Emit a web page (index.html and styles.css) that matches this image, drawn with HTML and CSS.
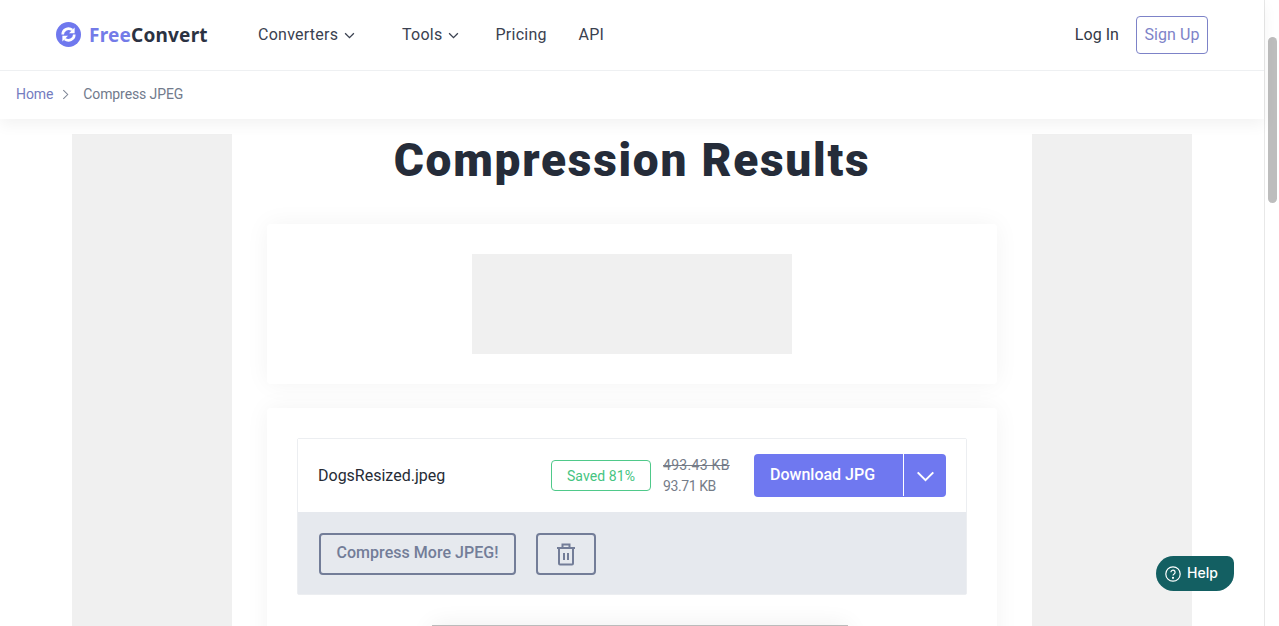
FILE: index.html
```html
<!DOCTYPE html>
<html lang="en">
<head>
<meta charset="utf-8">
<title>Compress JPEG</title>
<link rel="stylesheet" href="styles.css">
</head>
<body>
<div class="app">
  <div class="page">
    <header class="top">
      <nav class="nav">
        <a class="logo">
          <svg class="logo-icon" viewBox="0 0 25 25" width="25" height="25"><circle cx="12.500" cy="12.500" r="12.500" fill="#6f78ee"/><path d="M6.700 12.500a5.800 5.800 0 0 1 9.600-4.400" fill="none" stroke="#fff" stroke-width="2.600"/><path d="M18.300 12.500a5.800 5.800 0 0 1-9.600 4.400" fill="none" stroke="#fff" stroke-width="2.600"/><path d="M18.600 5.600v5.600h-5.600z" fill="#fff"/><path d="M6.400 19.400v-5.600h5.600z" fill="#fff"/></svg>
          <span class="logo-text"><span class="logo-free">Free</span>Convert</span>
        </a>
        <ul class="menu">
          <li class="menu-item m-conv">Converters <svg class="chev" viewBox="0 0 12 8" width="11" height="7"><path d="M1 1.500l5 5 5-5" fill="none" stroke="#3a4150" stroke-width="1.500"/></svg></li>
          <li class="menu-item m-tools">Tools <svg class="chev" viewBox="0 0 12 8" width="11" height="7"><path d="M1 1.500l5 5 5-5" fill="none" stroke="#3a4150" stroke-width="1.500"/></svg></li>
          <li class="menu-item m-pricing">Pricing</li>
          <li class="menu-item">API</li>
        </ul>
        <div class="auth">
          <a class="login">Log In</a>
          <a class="signup">Sign Up</a>
        </div>
      </nav>
      <div class="crumbs">
        <a class="crumb-home">Home</a>
        <svg class="crumb-sep" viewBox="0 0 8 12" width="7" height="11"><path d="M1.500 1l5 5-5 5" fill="none" stroke="#7d8494" stroke-width="1.200"/></svg>
        <span class="crumb-now">Compress JPEG</span>
      </div>
    </header>
    <div class="content">
      <aside class="ad-side"></aside>
      <main class="main">
        <h1 class="title">Compression Results</h1>
        <section class="card card-ad"><div class="ad-box"></div></section>
        <section class="card card-result">
          <div class="result">
            <div class="result-row">
              <span class="filename">DogsResized.jpeg</span>
              <span class="saved">Saved 81%</span>
              <div class="sizes"><s class="old">493.43 KB</s><span class="new">93.71 KB</span></div>
              <div class="download">
                <span class="dl-label">Download JPG</span>
                <span class="dl-arrow"><svg viewBox="0 0 20 12" width="19" height="11"><path d="M1.500 1.500l8.500 8.500 8.500-8.500" fill="none" stroke="#fff" stroke-width="2.200"/></svg></span>
              </div>
            </div>
            <div class="result-actions">
              <a class="btn-outline btn-more">Compress More JPEG!</a>
              <a class="btn-outline btn-trash">
                <svg viewBox="0 0 20 24" width="20" height="24" fill="none" stroke="#737d98" stroke-width="2"><path d="M1 6h18M6.500 6V2.500h7V6M3 6v15.500a1 1 0 0 0 1 1h12a1 1 0 0 0 1-1V6M8 11v7M12 11v7"/></svg>
              </a>
            </div>
          </div>
          <div class="peek"></div>
        </section>
      </main>
      <aside class="ad-side"></aside>
    </div>
  </div>
  <div class="scrollbar"><div class="thumb"></div></div>
</div>
<button class="help"><svg viewBox="0 0 16 16" width="16" height="16" fill="none" stroke="#fff" stroke-width="1.200"><circle cx="8" cy="8" r="7.200"/><path d="M5.900 6.200a2.100 2.100 0 1 1 3.200 1.800c-.7.400-1.100.8-1.100 1.600"/><circle cx="8" cy="11.800" r=".5" fill="#fff"/></svg><span class="help-text">Help</span></button>
</body>
</html>
```

FILE: styles.css
```css
* { box-sizing: border-box; }
html, body { margin: 0; height: 100%; overflow: hidden; background: #fff; }
body { font-family: "Noto Sans", Roboto, sans-serif; color: #2d3340; }
ul { list-style: none; margin: 0; padding: 0; }

.app { display: flex; height: 626px; overflow: hidden; }
.page { flex: 1; min-width: 0; }
.scrollbar { width: 15px; background: #fff; border-left: 1px solid #e8e8e8; padding: 37px 2px 0 3px; }
.thumb { height: 166px; background: #bdbdbd; border-radius: 5px; }

.top { position: relative; z-index: 2; background: #fff; box-shadow: 0 6px 14px rgba(0,0,0,.05); }
.nav { height: 71px; border-bottom: 1px solid #eef0f2; display: flex; align-items: center; padding: 0 56px 1px 56px; }
.logo { display: flex; align-items: center; gap: 8px; width: 202px; }
.logo-icon { flex: none; }
.logo-text { font-family: "Noto Sans", sans-serif; font-weight: 700; font-size: 19px; letter-spacing: .2px; color: #2b3242; }
.logo-free { color: #737be8; }
.menu { display: flex; align-items: center; font-family: Roboto, sans-serif; font-size: 16px; letter-spacing: .25px; color: #3a4150; }
.menu-item { display: flex; align-items: center; gap: 6px; }
.m-conv { width: 144px; }
.m-tools { width: 93.500px; }
.m-pricing { width: 83px; }
.chev { margin-top: 2px; }
.auth { margin-left: auto; display: flex; align-items: center; gap: 17px; font-family: Roboto, sans-serif; font-size: 16px; letter-spacing: .05px; }
.login { color: #323845; }
.signup { width: 72px; height: 38px; border: 1px solid #7d83c8; border-radius: 4px; color: #7d83c8; display: flex; align-items: center; justify-content: center; }

.crumbs { height: 48px; display: flex; align-items: center; padding: 0 0 2px 16px; font-family: Roboto, sans-serif; font-size: 14px; letter-spacing: -.1px; }
.crumb-home { color: #747cc0; }
.crumb-sep { margin: 0 14px 0 9px; }
.crumb-now { color: #717a8c; }

.content { display: flex; justify-content: center; padding-top: 15px; }
.ad-side { width: 160px; height: 600px; background: #f0f0f0; flex: none; }
.main { width: 800px; flex: none; padding: 0 35px; }
.title { margin: 0 0 38px; height: 52px; line-height: 52px; text-align: center; font-family: Roboto, sans-serif; font-weight: 900; font-size: 46px; letter-spacing: 1.750px; color: #252c39; }

.card { background: #fff; border-radius: 4px; box-shadow: 0 0 24px rgba(0,0,0,.05); padding: 30px; }
.card-ad { height: 160px; margin-bottom: 24px; display: flex; justify-content: center; }
.ad-box { width: 320px; height: 100px; background: #f0f0f0; }

.result { border: 1px solid #eceef1; border-radius: 2px; }
.result-row { height: 73px; display: flex; align-items: center; padding: 0 20px; background: #fff; }
.filename { width: 233px; font-family: Roboto, sans-serif; font-size: 16px; letter-spacing: 0; color: #262b35; }
.saved { width: 100px; height: 31px; border: 1px solid #4fc98a; border-radius: 4px; color: #45c481; font-family: Roboto, sans-serif; font-size: 14px; letter-spacing: .1px; display: flex; align-items: center; justify-content: center; }
.sizes { width: 91px; margin-left: 12px; display: flex; flex-direction: column; gap: 3px; font-family: Roboto, sans-serif; font-size: 14px; color: #757c88; line-height: 18px; }
.old { text-decoration: line-through; letter-spacing: .3px; }
.new { letter-spacing: -.4px; }
.download { display: flex; width: 192px; height: 43px; background: #6f78f0; border-radius: 4px; color: #fff; font-family: Roboto, sans-serif; font-weight: 500; font-size: 16px; }
.dl-label { width: 150px; border-right: 1px solid #fff; padding: 0 0 1px 16px; display: flex; align-items: center; margin-bottom: 1px; }
.dl-arrow { flex: 1; display: flex; align-items: center; justify-content: center; padding-top: 1px; }

.result-actions { height: 82px; background: #e6e9ee; display: flex; align-items: center; gap: 20px; padding: 1px 21px 0; }
.btn-outline { height: 42px; border: 2px solid #737d98; border-radius: 4px; display: flex; align-items: center; justify-content: center; color: #737d98; font-family: Roboto, sans-serif; font-weight: 500; font-size: 16px; letter-spacing: .03px; }
.btn-more { width: 197px; padding-bottom: 2px; }
.btn-trash { width: 60px; }
.btn-trash svg { width: 20px; height: 24px; }

.peek { width: 416px; height: 60px; margin: 30px 0 0 135px; background: #fff; border-top: 1px solid #bbb; box-shadow: 0 0 24px rgba(0,0,0,.07); }

.help { position: fixed; left: 1156px; top: 556px; width: 78px; height: 35px; border: 0; border-radius: 18px 7px 18px 18px; background: #135f62; color: #fff; display: flex; align-items: center; gap: 6px; padding: 0 0 0 9px; font-family: Inter, sans-serif; font-size: 14px; font-weight: 500; }
.help-text { margin-top: -2px; }
```
